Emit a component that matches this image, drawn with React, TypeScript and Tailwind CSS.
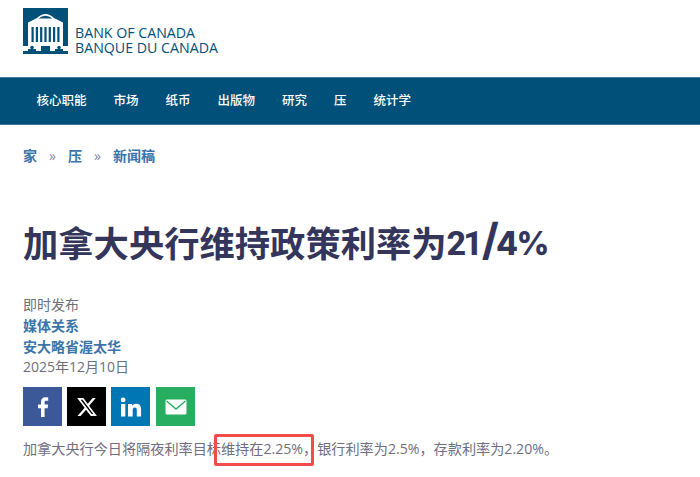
import React from 'react';

const NAV_ITEMS = ['核心职能', '市场', '纸币', '出版物', '研究', '压', '统计学'];
const CJK_FONT = "font-['Open_Sans','Noto_Sans_CJK_SC',sans-serif]";

const Logo: React.FC = () => (
  <div className="flex items-start gap-[7px]">
    <svg width="45" height="46" viewBox="0 0 45 46" className="block">
      <rect width="45" height="38" fill="#00507a" />
      {/* Pediment */}
      <path d="M5 14.500 L14 10 Q22.500 2 31 10 L40 14.500 V17 H5 Z" fill="#fff" />
      <path d="M15.500 10.500 Q22.500 5 29.500 10.500 Z" fill="#00507a" />
      {/* Columns */}
      <rect x="5" y="17" width="35" height="21" fill="#fff" />
      <path
        d="M8.500 19h2.200v15H8.500zM12.800 19h2.200v15h-2.200zM17.100 19h2.200v15h-2.200zM21.400 19h2.200v15h-2.200zM25.700 19h2.200v15h-2.200zM30 19h2.200v15H30zM34.300 19h2.200v15h-2.200z"
        fill="#00507a"
      />
      {/* Steps and lamps */}
      <path d="M0 46 V43 H5 V41 H8 V40 H10 V41 H13 V43 H18 V38 H27 V43 H32 V41 H35 V40 H37 V41 H40 V43 H45 V46 Z" fill="#00507a" />
      <circle cx="9" cy="39.500" r="1.800" fill="#00507a" />
      <circle cx="36" cy="39.500" r="1.800" fill="#00507a" />
    </svg>
    <div className="font-['Open_Sans',sans-serif] text-[14.2px] leading-[15px] text-[#00507a] pt-[17px]">
      <div>BANK OF CANADA</div>
      <div>BANQUE DU CANADA</div>
    </div>
  </div>
);

const ShareButtons: React.FC = () => (
  <div className="flex gap-[5px]">
    <div className="w-[39px] h-[39px] bg-[#3b5998] flex items-center justify-center">
      <svg width="24" height="24" viewBox="0 0 24 24" fill="#fff">
        <path d="M13.6 22v-8.800h3l.5-3.600h-3.500V7.400c0-1 .3-1.700 1.800-1.700h1.800V2.500c-.4 0-1.500-.2-2.700-.2-2.700 0-4.500 1.600-4.500 4.600v2.700H7v3.600h3v8.800z" />
      </svg>
    </div>
    <div className="w-[39px] h-[39px] bg-black flex items-center justify-center">
      <svg width="22" height="22" viewBox="0 0 24 24" fill="#fff">
        <path d="M18.244 2.250h3.308l-7.227 8.260 8.502 11.240H16.170l-5.214-6.817L4.990 21.750H1.680l7.730-8.835L1.254 2.250H8.080l4.713 6.231zm-1.161 17.520h1.833L7.084 4.126H5.117z" />
      </svg>
    </div>
    <div className="w-[39px] h-[39px] bg-[#0077b5] flex items-center justify-center mr-[1px]">
      <svg width="24" height="24" viewBox="0 0 24 24" fill="#fff">
        <path d="M2 9h4.300v12.500H2zM4.150 2.500a2.400 2.400 0 1 1 0 4.800 2.400 2.400 0 0 1 0-4.800zM9 9h4.100v1.800c.6-1.100 2-2.100 4-2.100 4.200 0 5 2.700 5 6.300v6.500h-4.300v-5.800c0-1.400 0-3.200-1.900-3.200s-2.200 1.500-2.200 3.100v5.900H9z" />
      </svg>
    </div>
    <div className="w-[39px] h-[39px] bg-[#27ae60] flex items-center justify-center">
      <svg width="24" height="24" viewBox="0 0 24 24">
        <rect x="1.500" y="4.500" width="21" height="15" rx="1.500" fill="#fff" />
        <path d="M2.500 6 L12 14 L21.500 6" fill="none" stroke="#27ae60" strokeWidth="1.400" />
      </svg>
    </div>
  </div>
);

export default function App() {
  return (
    <div className={`w-[700px] h-[477px] overflow-hidden bg-white ${CJK_FONT}`}>
      <header className="h-[77px] pl-[23px] pt-[8px]">
        <Logo />
      </header>

      <nav className="h-[48px] bg-[#00507a] border-y border-[#3d7b9c] flex items-center gap-[27px] pl-[36.500px] text-[12.5px] font-medium text-white">
        {NAV_ITEMS.map((item) => (
          <span key={item}>{item}</span>
        ))}
      </nav>

      <div className="flex items-center pl-[23px] pt-[21px] text-[14px] leading-[20px] font-semibold text-[#3a74a8]">
        <span>家</span>
        <span className="mx-[12px] font-normal text-[#8486a0]">»</span>
        <span>压</span>
        <span className="mx-[12px] font-normal text-[#8486a0]">»</span>
        <span>新闻稿</span>
      </div>

      <h1 className="pl-[23px] pt-[48px] font-['Noto_Sans_CJK_SC',sans-serif] text-[35.3px] leading-[50px] font-bold text-[#33365a] whitespace-nowrap">
        加拿大央行维持政策利率为
        <span className="font-['Roboto',sans-serif] text-[34px] font-extrabold align-[2px] tracking-[-3px]">21</span>
        <span className="font-['Inter',sans-serif] text-[44px] font-bold align-[2px] ml-[2px] mr-[-3px]">/</span>
        <span className="font-['Inter',sans-serif] text-[32px] font-extrabold align-[2px] tracking-[-1.500px]">4%</span>
      </h1>

      <div className="pl-[23px] pt-[26px] text-[14px] leading-[20.75px] text-[#6e6e78]">
        <div>即时发布</div>
        <div className="font-semibold text-[#3a74a8]">媒体关系</div>
        <div className="font-semibold text-[#3a74a8]">安大略省渥太华</div>
        <div>2025年12月10日</div>
      </div>

      <div className="pl-[23px] pt-[9px]">
        <ShareButtons />
      </div>

      <div className="relative pl-[23px] pt-[12px]">
        <p className="text-[14.15px] leading-[22px] text-[#6e6e80] whitespace-nowrap">
          加拿大央行今日将隔夜利率目标维持在2.25%，银行利率为2.5%，存款利率为2.20%。
        </p>
        <div className="absolute left-[214px] top-[8px] w-[100px] h-[32px] border-[3px] border-[#f44a4a] rounded-[2px]" />
      </div>
    </div>
  );
}
